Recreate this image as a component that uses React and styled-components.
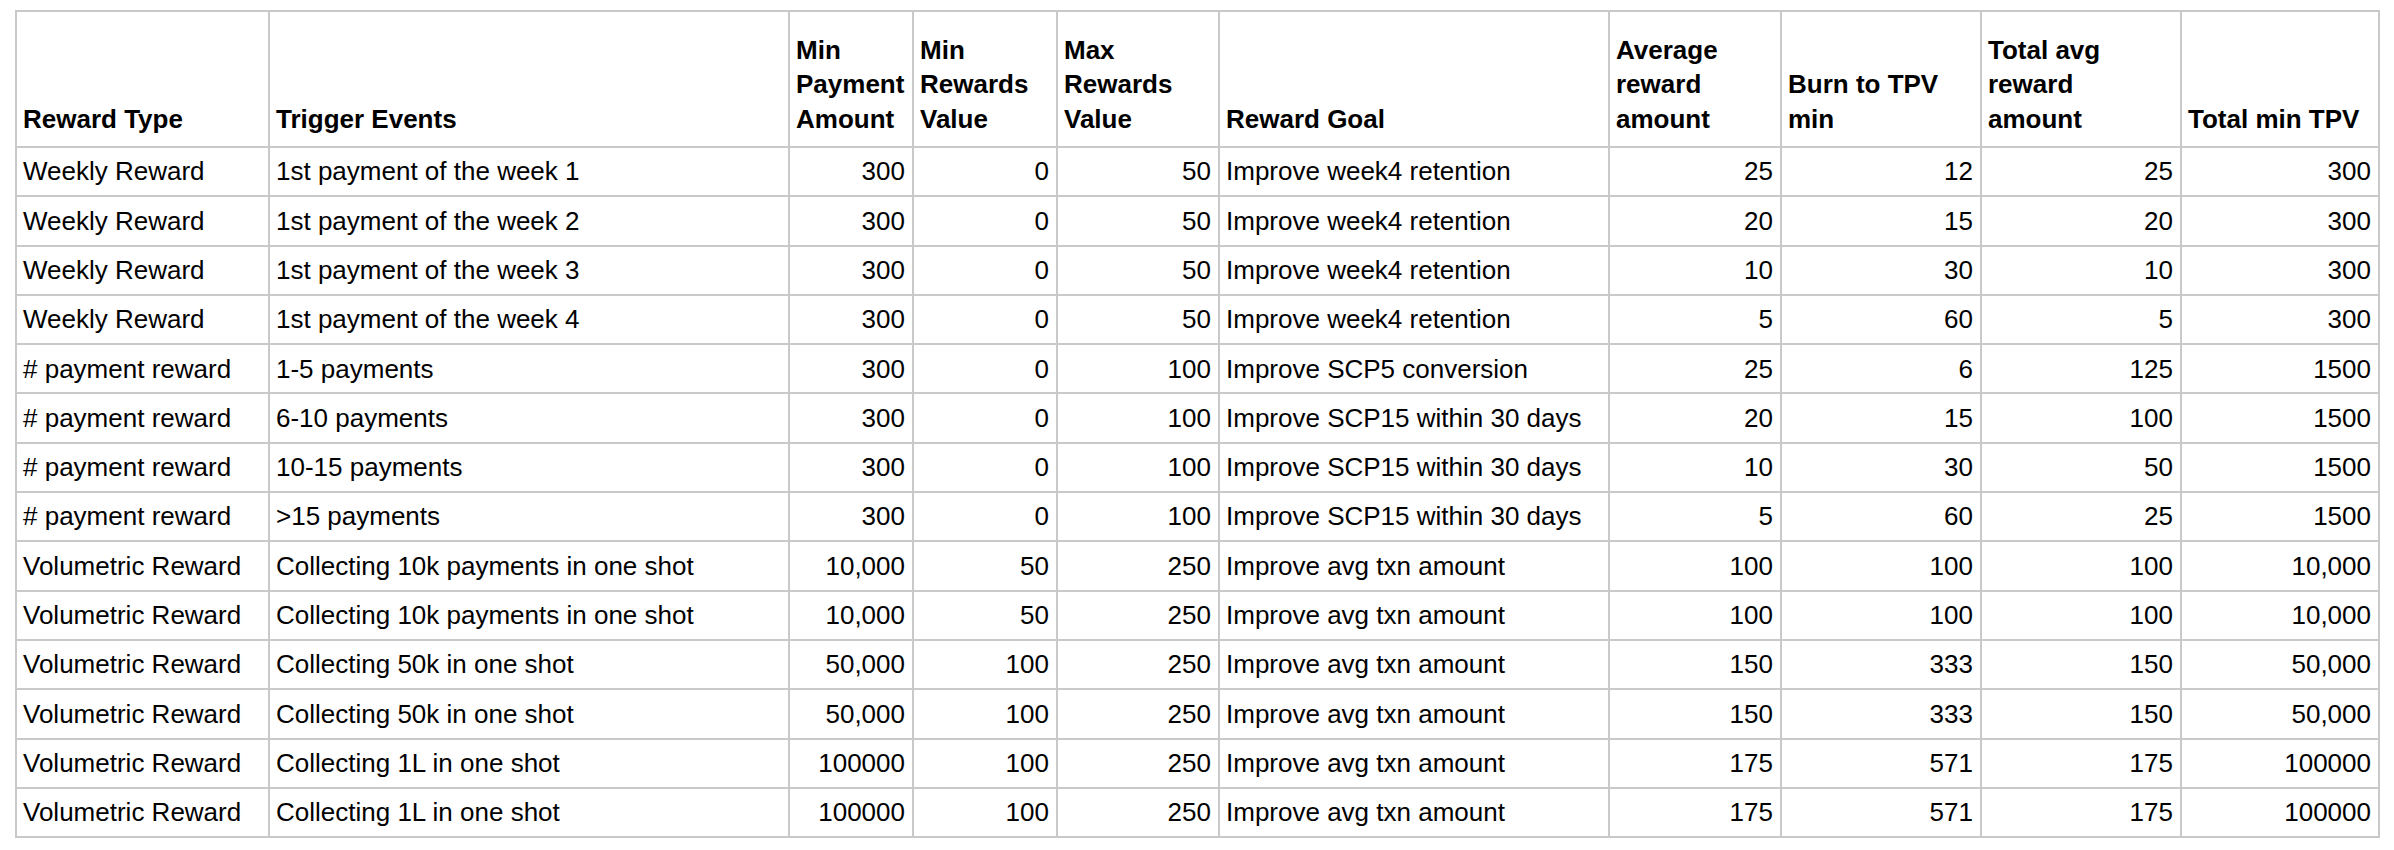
import React from "react";
import styled, { createGlobalStyle } from "styled-components";

const GlobalStyle = createGlobalStyle`
  body {
    margin: 0;
    background: #ffffff;
    font-family: "Liberation Sans", Arial, sans-serif;
    color: #000000;
  }
`;

const Page = styled.div`
  padding: 10px 0 0 15px;
`;

const Sheet = styled.div`
  display: grid;
  grid-template-columns: 251px 518px 122px 142px 160px 388px 170px 198px 198px 196px;
  grid-template-rows: 134px repeat(14, 47.3px);
  gap: 2px;
  padding: 2px;
  width: max-content;
  background: #c9c9c9;
`;

const HeadCell = styled.div`
  display: flex;
  align-items: flex-end;
  padding: 0 8px 10px 6px;
  background: #ffffff;
  font-size: 26px;
  font-weight: 700;
  line-height: 34.5px;
`;

const Cell = styled.div`
  display: flex;
  align-items: center;
  justify-content: ${(props) => (props.$num ? "flex-end" : "flex-start")};
  padding: 0 7px 0 6px;
  background: #ffffff;
  font-size: 26px;
  line-height: 34.5px;
  white-space: nowrap;
  overflow: hidden;
`;

const headers = [
  "Reward Type",
  "Trigger Events",
  "Min Payment Amount",
  "Min Rewards Value",
  "Max Rewards Value",
  "Reward Goal",
  "Average reward amount",
  "Burn to TPV min",
  "Total avg reward amount",
  "Total min TPV",
];

const numericCols = [2, 3, 4, 6, 7, 8, 9];

const rows = [
  ["Weekly Reward", "1st payment of the week 1", "300", "0", "50", "Improve week4 retention", "25", "12", "25", "300"],
  ["Weekly Reward", "1st payment of the week 2", "300", "0", "50", "Improve week4 retention", "20", "15", "20", "300"],
  ["Weekly Reward", "1st payment of the week 3", "300", "0", "50", "Improve week4 retention", "10", "30", "10", "300"],
  ["Weekly Reward", "1st payment of the week 4", "300", "0", "50", "Improve week4 retention", "5", "60", "5", "300"],
  ["# payment reward", "1-5 payments", "300", "0", "100", "Improve SCP5 conversion", "25", "6", "125", "1500"],
  ["# payment reward", "6-10 payments", "300", "0", "100", "Improve SCP15 within 30 days", "20", "15", "100", "1500"],
  ["# payment reward", "10-15 payments", "300", "0", "100", "Improve SCP15 within 30 days", "10", "30", "50", "1500"],
  ["# payment reward", ">15 payments", "300", "0", "100", "Improve SCP15 within 30 days", "5", "60", "25", "1500"],
  ["Volumetric Reward", "Collecting 10k payments in one shot", "10,000", "50", "250", "Improve avg txn amount", "100", "100", "100", "10,000"],
  ["Volumetric Reward", "Collecting 10k payments in one shot", "10,000", "50", "250", "Improve avg txn amount", "100", "100", "100", "10,000"],
  ["Volumetric Reward", "Collecting 50k in one shot", "50,000", "100", "250", "Improve avg txn amount", "150", "333", "150", "50,000"],
  ["Volumetric Reward", "Collecting 50k in one shot", "50,000", "100", "250", "Improve avg txn amount", "150", "333", "150", "50,000"],
  ["Volumetric Reward", "Collecting 1L in one shot", "100000", "100", "250", "Improve avg txn amount", "175", "571", "175", "100000"],
  ["Volumetric Reward", "Collecting 1L in one shot", "100000", "100", "250", "Improve avg txn amount", "175", "571", "175", "100000"],
];

export default function App() {
  return (
    <>
      <GlobalStyle />
      <Page>
        <Sheet>
          {headers.map((h) => (
            <HeadCell key={h}>{h}</HeadCell>
          ))}
          {rows.map((row, r) =>
            row.map((value, c) => (
              <Cell key={`${r}-${c}`} $num={numericCols.includes(c)}>
                {value}
              </Cell>
            ))
          )}
        </Sheet>
      </Page>
    </>
  );
}
